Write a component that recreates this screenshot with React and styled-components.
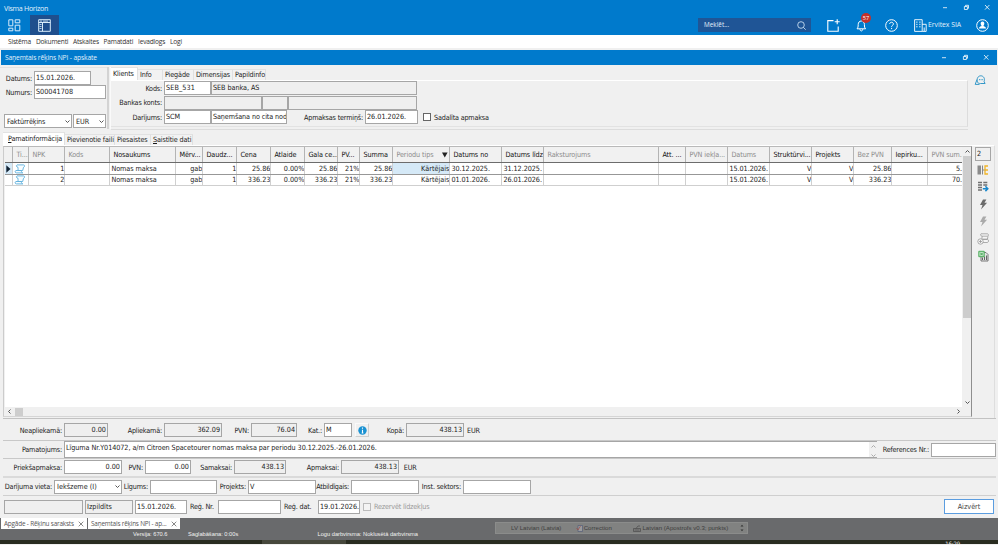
import styled, { createGlobalStyle, css } from "styled-components";

const GlobalStyle = createGlobalStyle`
  * {
    box-sizing: border-box;
  }
  body {
    margin: 0;
    overflow: hidden;
    font-family: "DejaVu Sans Condensed", "DejaVu Sans", sans-serif;
    font-stretch: condensed;
    font-size: 7.2px;
    line-height: 10px;
    letter-spacing: -0.14px;
    color: #1c1c1c;
    white-space: nowrap;
  }
  svg {
    display: block;
    flex: none;
  }
`;

const Screen = styled.div`
  width: 998px;
  height: 545px;
  display: flex;
  flex-direction: column;
  background-color: #f0f0f0;
  overflow: hidden;
`;

const segoe = css`
  font-family: "Open Sans", "Noto Sans", sans-serif;
  font-stretch: normal;
  letter-spacing: 0;
`;

const TitleBar = styled.div`
  ${segoe}
  height: 15px;
  flex: none;
  padding: 0 8px 0 4px;
  display: flex;
  align-items: center;
  justify-content: space-between;
  background-color: #007acc;
  color: #e3f1fb;
  font-size: 7.1px;
  letter-spacing: -0.3px;
`;

const InnerTitle = styled(TitleBar)`
  margin: 2px 1px 0 1px;
  font-size: 6.7px;
  letter-spacing: -0.13px;
`;

const ToolBar = styled.div`
  ${segoe}
  height: 20px;
  flex: none;
  display: flex;
  align-items: center;
  background-color: #007acc;
  color: #e3f1fb;
  font-size: 6.6px;
`;

const Tile = styled.div`
  width: ${(props) => props.$w}px;
  height: 20px;
  display: flex;
  align-items: center;
  justify-content: center;
  background-color: ${(props) => (props.$active ? "#1f4f8d" : "transparent")};
`;

const Search = styled.div`
  width: 113px;
  height: 14px;
  margin-left: auto;
  padding: 0 5px 0 6px;
  display: flex;
  align-items: center;
  justify-content: space-between;
  background-color: #1f5596;
  font-size: 6.4px;
`;

const Bell = styled.div`
  position: relative;
  margin-left: 16px;
  height: 13px;
`;

const Badge = styled.span`
  position: absolute;
  left: 5px;
  top: -6px;
  width: 10px;
  height: 10px;
  border-radius: 50%;
  background-color: #c4302b;
  color: white;
  font-size: 5.6px;
  line-height: 10px;
  text-align: center;
`;

const Company = styled.span`
  width: 34px;
  padding-left: 1px;
  font-size: 6.9px;
  letter-spacing: -0.05px;
`;

const Menu = styled.div`
  ${segoe}
  height: 13px;
  flex: none;
  padding-left: 8px;
  display: flex;
  align-items: center;
  background-color: white;
  font-size: 6.6px;
  letter-spacing: -0.2px;
  color: #333;
`;

const MenuItem = styled.span`
  width: ${(props) => props.$w}px;
`;

const Top = styled.div`
  height: 66px;
  flex: none;
  display: flex;
`;

const Left = styled.div`
  width: 107px;
  margin-top: 2px;
  padding: 3px 0 0 4px;
  height: 61px;
  border-top: 1px solid #e2e2e2;
`;

const Splitter = styled.div`
  width: 4px;
  height: 62px;
  margin-top: 2px;
  border-left: 2px solid #d3d3d3;
  border-right: 1px solid #fafafa;
`;

const Client = styled.div`
  width: 857px;
  height: 63px;
  margin-top: 2px;
  border-bottom: 1px solid #dcdcdc;
`;

const Page = styled.div`
  height: 47px;
  padding-left: 1px;
  border-top: 1px solid #fff;
  border-right: 1px solid #dcdcdc;
  border-bottom: 1px solid #e2e2e2;
`;

const TabStrip = styled.div`
  height: 13px;
  flex: none;
  display: flex;
  align-items: flex-end;
`;

const Tab = styled.div`
  width: ${(props) => props.$w}px;
  height: ${(props) => (props.$active ? 13 : 11)}px;
  padding-left: 2px;
  line-height: ${(props) => (props.$active ? 11 : 9)}px;
  background-color: ${(props) => (props.$active ? "#fff" : "#f2f2f2")};
  border-top: 1px solid #e2e2e2;
  border-right: 1px solid #e0e0e0;
`;

const Row = styled.div`
  display: flex;
  align-items: center;
  height: ${(props) => props.$h || 14}px;
  margin-top: ${(props) => props.$mt || 0}px;
`;

const Label = styled.div`
  width: ${(props) => props.$w}px;
  display: flex;
  flex: none;
  justify-content: ${(props) => (props.$start ? "flex-start" : "flex-end")};
  padding: ${(props) => (props.$start ? "1px 0 0 3px" : "1px 2px 0 0")};
  letter-spacing: ${(props) => props.$ls || -0.18}px;
  color: ${(props) => (props.$muted ? "#999" : "#1c1c1c")};
`;

const Field = styled.div`
  width: ${(props) => props.$w}px;
  height: ${(props) => props.$h || 14}px;
  flex: none;
  padding: 0 1px;
  border: 1px solid #a6a6a6;
  background-color: ${(props) => (props.$off ? "#efefef" : "#fff")};
  line-height: 11px;
  overflow: hidden;
  text-align: ${(props) => (props.$num ? "right" : "left")};
  letter-spacing: ${(props) => props.$ls || 0}px;
`;

const Combo = styled(Field)`
  display: flex;
  align-items: center;
  justify-content: space-between;
  padding-left: 2px;
`;

const Gap = styled.div`
  width: ${(props) => props.$w}px;
  flex: none;
`;

const Check = styled.div`
  width: 8px;
  height: 8px;
  flex: none;
  border: 1px solid ${(props) => (props.$muted ? "#bbb" : "#666")};
  background-color: ${(props) => (props.$muted ? "#f4f4f4" : "#fff")};
`;

const Middle = styled.div`
  height: 273px;
  flex: none;
  display: flex;
  margin: 0 3px 0 3px;
  border-top: 1px solid #fff;
  border-right: 1px solid #dedede;
`;

const GridBox = styled.div`
  width: 969px;
  height: 271px;
  padding-left: 1px;
  display: flex;
  flex-direction: column;
  border-top: 1px solid #b9b9b9;
  border-left: 1px solid #ccc;
  border-right: 1px solid #8e8e8e;
  border-bottom: 1px solid #d5d5d5;
`;

const GridMain = styled.div`
  display: flex;
  height: 260px;
`;

const Grid = styled.div`
  width: 957px;
  background-color: white;
  overflow: hidden;
`;

const Line = styled.div`
  display: flex;
  height: ${(props) => props.$h}px;
  border-bottom: ${(props) => props.$border};
  background-color: ${(props) => (props.$head ? "#f1f1f1" : "#fff")};
`;

const Cell = styled.div`
  width: ${(props) => props.$w}px;
  flex: none;
  display: flex;
  align-items: center;
  justify-content: ${(props) => (props.$right ? "flex-end" : "flex-start")};
  padding-left: 1px;
  overflow: hidden;
  border-right: 1px solid #d0d0d0;
  background-color: ${(props) => (props.$hot ? "#d5e9f7" : "transparent")};
  letter-spacing: ${(props) => (props.$right ? 0 : -0.05)}px;
`;

const Head = styled(Cell)`
  padding-left: 3px;
  justify-content: ${(props) => (props.$sort ? "space-between" : "flex-start")};
  color: ${(props) => (props.$grey ? "#8b8b8b" : "#111")};
  border-right-color: #b4b4b4;
  letter-spacing: -0.08px;
`;

const VScroll = styled.div`
  width: 9px;
  padding-left: 1px;
  display: flex;
  flex-direction: column;
  align-items: center;
  justify-content: space-between;
  background-color: #f0f0f0;
`;

const VThumb = styled.div`
  width: 8px;
  height: 162px;
  margin: 0 0 auto;
  background-color: #cdcdcd;
`;

const HScroll = styled.div`
  height: 9px;
  padding: 0 10px 0 2px;
  display: flex;
  align-items: center;
`;

const HThumb = styled.div`
  width: 8px;
  height: 8px;
  margin: 0 auto 0 3px;
  background-color: #cdcdcd;
`;

const Side = styled.div`
  flex: 1;
  display: flex;
  flex-direction: column;
  align-items: center;
  padding-top: 1px;
`;

const SideItem = styled.div`
  height: 17.3px;
  display: flex;
  align-items: center;
  justify-content: center;
`;

const Band = styled.div`
  height: ${(props) => props.$h}px;
  flex: none;
  margin: 0 2px 0 3px;
  padding-top: ${(props) => props.$pt || 0}px;
  border-top: ${(props) => props.$line || 1}px solid ${(props) => props.$color || "#c2c2c2"};
`;

const Memo = styled.div`
  width: 813px;
  height: 18px;
  padding: 0 1px;
  display: flex;
  justify-content: space-between;
  background-color: white;
  border: 1px solid #a6a6a6;
  border-right: 0;
  border-bottom-width: 2px;
  line-height: 12px;
  letter-spacing: -0.06px;
`;

const Spin = styled.div`
  width: 8px;
  margin-right: -1px;
  display: flex;
  flex-direction: column;
  align-items: center;
  justify-content: space-around;
  background-color: #f0f0f0;
`;

const InfoButton = styled.div`
  width: 14px;
  height: 14px;
  margin: 0 2px 0 3px;
  display: flex;
  align-items: center;
  justify-content: center;
  border: 1px solid #fafafa;
  border-right-color: #cfcfcf;
  border-bottom-color: #cfcfcf;
`;

const Button = styled.button`
  width: 50px;
  height: 15px;
  margin-left: auto;
  padding: 0;
  border: 1px solid #5b9de0;
  background-color: white;
  color: #444;
  font: inherit;
  letter-spacing: 0;
`;

const Footer = styled.div`
  ${segoe}
  height: 22px;
  flex: none;
  background-color: #696a6c;
`;

const Windows = styled.div`
  height: 11px;
  padding-left: 1px;
  display: flex;
  gap: 1px;
`;

const WindowTab = styled.div`
  width: ${(props) => props.$w}px;
  padding: 0 3px;
  display: flex;
  align-items: center;
  justify-content: space-between;
  background-color: white;
  color: #555;
  font-size: 6.4px;
  letter-spacing: -0.19px;
`;

const LangBar = styled.div`
  width: 253px;
  height: 12px;
  margin: 4px 0 0 314px;
  padding: 0 3px 0 15px;
  display: flex;
  align-items: center;
  flex: none;
  background-color: #818281;
  border: 1px solid #8b8c8b;
  color: #3e3e3e;
  font-family: "Liberation Sans", sans-serif;
  font-size: 6.1px;
`;

const LangItem = styled.div`
  width: ${(props) => props.$w}px;
  display: flex;
  gap: 1px;
  align-items: center;
`;

const Status = styled.div`
  height: 11px;
  display: flex;
  padding-left: 133px;
  color: #f2f2f2;
  font-family: "Liberation Sans", sans-serif;
  font-size: 5.7px;
  line-height: 11px;
  width: 490px;
`;

const Taskbar = styled.div`
  height: 4px;
  flex: none;
  display: flex;
  justify-content: space-between;
  padding: 0 38px 0 262px;
  overflow: hidden;
  background-color: #292c20;
  color: #eee;
  font-size: 6px;
  line-height: 8px;
`;

const TaskItem = styled.div`
  width: 84px;
  background-color: #46483c;
`;

function Chevron({ dir = "down", color = "#555", size = 5 }) {
  const turn = { down: 0, up: 180, left: 90, right: -90 }[dir];
  return (
    <svg width={size} height={size} viewBox="0 0 10 10" style={{ margin: "2px 0" }}>
      <path
        d="M1 3l4 4 4-4"
        fill="none"
        stroke={color}
        strokeWidth="2"
        transform={`rotate(${turn} 5 5)`}
      />
    </svg>
  );
}

function WindowButtons() {
  return (
    <svg width="48" height="7" viewBox="0 0 48 7" fill="none" stroke="#fff" strokeWidth=".8">
      <path d="M1 3.7h4M43 1l4.4 4.6M47.4 1L43 5.6" />
      <path d="M22.4 2.5h3v3h-3zM23.5 2.4V1.3h3v3h-1" />
    </svg>
  );
}

function Cross() {
  return (
    <svg width="6" height="6" viewBox="0 0 6 6" stroke="#555" strokeWidth=".7">
      <path d="M.7.7l4.6 4.6M5.3.7L.7 5.3" />
    </svg>
  );
}

function Scroll() {
  return (
    <svg width="12" height="10" viewBox="0 0 12 10" fill="#f7fcff" stroke="#5aaedb" strokeWidth=".9">
      <path d="M3 .9h6.6c1.300 0 1.300 2.200-.1 2.400L8.700 6.500H4C4 5.300 4.200 4.200 4 3.300 2.500 3.300 1.800 1.400 3 .9z" />
      <path d="M1.800 6.500h5.400c.2 1.200.7 2.400 1.600 2.400H2.400C1 8.900.8 7 1.800 6.500z" />
    </svg>
  );
}

function Bolt({ color }) {
  return (
    <svg width="9" height="11" viewBox="0 0 9 11" fill={color}>
      <path d="M4 .5h3.400L5.500 3.700h2.600L2 10.500l1.500-4.500H1z" />
    </svg>
  );
}

const columns = [
  ["Ti...", 16, 1],
  ["NPK", 36, 1],
  ["Kods", 45, 1],
  ["Nosaukums", 66],
  ["Mērv...", 27],
  ["Daudz...", 34],
  ["Cena", 34],
  ["Atlaide", 34],
  ["Gala ce...", 33],
  ["PV...", 22],
  ["Summa", 33],
  ["Periodu tips", 57, 1],
  ["Datums no", 52],
  ["Datums līdz", 42],
  ["Raksturojums", 115, 1],
  ["Att. ...", 27],
  ["PVN iekļa...", 42, 1],
  ["Datums", 42, 1],
  ["Struktūrvi...", 42],
  ["Projekts", 42],
  ["Bez PVN", 38, 1],
  ["Iepirku...", 36],
  ["PVN sum...", 43, 1],
];

const rows = [
  ["", "1", "", "Nomas maksa", "gab", "1", "25.86", "0.00%", "25.86", "21%", "25.86", "Kārtējais",
    "30.12.2025.", "31.12.2025.", "", "", "", "15.01.2026.", "V", "V", "25.86", "", "5.43"],
  ["", "2", "", "Nomas maksa", "gab", "1", "336.23", "0.00%", "336.23", "21%", "336.23", "Kārtējais",
    "01.01.2026.", "26.01.2026.", "", "", "", "15.01.2026.", "V", "V", "336.23", "", "70.61"],
];

const leftAligned = [0, 3, 12, 13, 17];

function Table() {
  return (
    <Grid>
      <Line $h={16} $head $border="1px solid #6c6c6c">
        <Head $w={8.4} />
        {columns.map(([name, w, grey]) => (
          <Head key={name + w} $w={w} $grey={grey} $sort={name === "Periodu tips"}>
            {name}
            {name === "Periodu tips" && (
              <svg width="8" height="6" viewBox="0 0 8 6" fill="#222">
                <path d="M1 .5h5.6L3.800 5.500z" />
              </svg>
            )}
          </Head>
        ))}
      </Line>
      {rows.map((row, r) => (
        <Line key={r} $h={r ? 11 : 12} $border={r ? "1px solid #cfcfcf" : "1px solid #979797"}>
          <Cell $w={8.4} $hot={r === 0}>
            {r === 0 && (
              <svg width="5" height="8" viewBox="0 0 5 8" fill="#123">
                <path d="M.3.3v7.400L4.500 4z" />
              </svg>
            )}
          </Cell>
          {row.map((text, i) => (
            <Cell
              key={i}
              $w={columns[i][1]}
              $right={!leftAligned.includes(i)}
              $hot={r === 0 && i === 11}
            >
              {i === 0 ? <Scroll /> : text}
            </Cell>
          ))}
        </Line>
      ))}
    </Grid>
  );
}

function Header() {
  return (
    <>
      <TitleBar>
        Visma Horizon
        <WindowButtons />
      </TitleBar>
      <ToolBar>
        <Tile $w={29}>
          <svg width="13" height="13" viewBox="0 0 13 13" fill="none" stroke="#d9ecfa">
            <path d="M.8.8h4v6h-4zM7.200.8h4.600v3H7.200zM.8 9.200h4v2.600h-4zM7.200 6.200h4.600v5.600H7.200z" />
          </svg>
        </Tile>
        <Gap $w={1} />
        <Tile $w={29} $active>
          <svg width="13" height="13" viewBox="0 0 13 13" fill="none" stroke="#d9ecfa">
            <path d="M.7.7h11.600v11.600H.7zM.7 3.500h11.600M4.500 3.500v8.800" />
            <path d="M1.500 5.500h2M1.500 7.500h2M1.500 9.500h2M2 2.100h2M5 2.100h5" strokeWidth=".8" />
          </svg>
        </Tile>
        <Search>
          Meklēt...
          <svg width="9" height="9" viewBox="0 0 9 9" fill="none" stroke="#d9ecfa" strokeWidth=".8">
            <circle cx="4" cy="4" r="3.300" />
            <path d="M6.400 6.400L8.700 8.700" />
          </svg>
        </Search>
        <Gap $w={16} />
        <svg width="13" height="13" viewBox="0 0 13 13" fill="none" stroke="#fff" strokeWidth="1.100">
          <path d="M6.500 1.600H.8v10.700h10.400V7.500M10.200.2v5M7.700 2.700h5" />
        </svg>
        <Bell>
          <svg width="11" height="13" viewBox="0 0 11 13" fill="none" stroke="#fff">
            <path d="M1 9.800c1-1 1.200-2 1.200-4.300C2.200 3.400 3.500 2 5.300 2s3.100 1.400 3.100 3.500c0 2.300.2 3.300 1.200 4.300zM4 10.200c0 2.300 2.700 2.300 2.700 0" />
          </svg>
          <Badge>57</Badge>
        </Bell>
        <Gap $w={18} />
        <svg width="13" height="13" viewBox="0 0 13 13" fill="none" stroke="#fff">
          <circle cx="6.500" cy="6.500" r="5.800" />
          <path d="M4.700 5c0-2.400 3.700-2.300 3.700 0 0 1.400-1.800 1.300-1.800 2.800M6.600 8.900v1.200" />
        </svg>
        <Gap $w={16} />
        <svg width="13" height="13" viewBox="0 0 13 13" fill="none" stroke="#fff">
          <path d="M.6 12.400V.7h7.600v11.700zM8.200 5.300h4v7.100H8.200M10.200 8.500v3.500" strokeWidth=".9" />
          <path d="M2.900 2.500v6.500M5.900 2.500v6.500" strokeDasharray="1.300 1" />
        </svg>
        <Company>Ervitex SIA</Company>
        <Gap $w={15} />
        <svg width="13" height="13" viewBox="0 0 13 13" fill="none" stroke="#fff">
          <circle cx="6.500" cy="6.500" r="5.800" />
          <path
            d="M6.500 2.600c1.400 0 2 1 1.800 2.300-.1.900-.5 1.400-.9 1.800.1.700 2.600.7 2.600 2.800h-7c0-2.100 2.500-2.100 2.600-2.800-.4-.4-.8-.9-.9-1.800-.2-1.300.4-2.300 1.800-2.300z"
            fill="#fff"
            stroke="none"
          />
        </svg>
        <Gap $w={9} />
      </ToolBar>
      <Menu>
        <MenuItem $w={28}>Sistēma</MenuItem>
        <MenuItem $w={37}>Dokumenti</MenuItem>
        <MenuItem $w={30.5}>Atskaites</MenuItem>
        <MenuItem $w={34.5}>Pamatdati</MenuItem>
        <MenuItem $w={32}>Ievadlogs</MenuItem>
        <MenuItem $w={20}>Logi</MenuItem>
      </Menu>
    </>
  );
}

function InvoiceHeader() {
  return (
    <Top>
      <Left>
        <Row>
          <Label $w={30}>Datums:</Label>
          <Field $w={57}>15.01.2026.</Field>
        </Row>
        <Row>
          <Label $w={30}>Numurs:</Label>
          <Field $w={72}>S00041708</Field>
        </Row>
        <Row $mt={15}>
          <Combo $w={68} $ls={-0.1}>
            Faktūrrēķins
            <Chevron />
          </Combo>
          <Gap $w={1} />
          <Combo $w={33}>
            EUR
            <Chevron />
          </Combo>
        </Row>
      </Left>
      <Splitter />
      <Client>
        <TabStrip>
          <Tab $w={27} $active>Klients</Tab>
          <Tab $w={25}>Info</Tab>
          <Tab $w={31}>Piegāde</Tab>
          <Tab $w={39}>Dimensijas</Tab>
          <Tab $w={33}>Papildinfo</Tab>
        </TabStrip>
        <Page>
          <Row>
            <Label $w={52}>Kods:</Label>
            <Field $w={47} $ls={0.1}>SEB_531</Field>
            <Field $w={206} $off $ls={-0.05}>SEB banka, AS</Field>
          </Row>
          <Row $h={15}>
            <Label $w={52}>Bankas konts:</Label>
            <Field $w={98} $off />
            <Field $w={26} $off />
            <Field $w={129} $off />
          </Row>
          <Row>
            <Label $w={52}>Darījums:</Label>
            <Field $w={47}>SCM</Field>
            <Field $w={76} $ls={-0.1}>Saņemšana no cita nodokļa</Field>
            <Label $w={78}>Apmaksas termiņš:</Label>
            <Field $w={53}>26.01.2026.</Field>
            <Gap $w={5} />
            <Check />
            <Label $w={60} $start>Sadalīta apmaksa</Label>
          </Row>
        </Page>
      </Client>
      <svg width="12" height="12" viewBox="0 0 12 12" fill="none" stroke="#3498c8" style={{ margin: "9px 0 0 6px" }}>
        <path d="M3.500 8.300C2.300 4.800 4 1.800 6.800 1.800s4.500 3 3.300 5.800l1 1.900H6.600C5 9.500 4 9 3.500 8.300zM3 5.500L1.200 10.400h4.300" />
        <path d="M5 5.700h4.200" strokeDasharray="1 .6" />
      </svg>
    </Top>
  );
}

function Lines() {
  return (
    <>
      <TabStrip style={{ margin: "1px 0 0 3px" }}>
        <Tab $w={62} $active style={{ paddingLeft: 5 }}><u>P</u>amatinformācija</Tab>
        <Tab $w={50}>Pievienotie faili</Tab>
        <Tab $w={36}>Piesaistes</Tab>
        <Tab $w={42}><u>S</u>aistītie dati</Tab>
      </TabStrip>
      <Middle>
        <GridBox>
          <GridMain>
            <Table />
            <VScroll>
              <Chevron dir="up" />
              <VThumb />
              <Chevron />
            </VScroll>
          </GridMain>
          <HScroll>
            <Chevron dir="left" />
            <HThumb />
            <Chevron dir="right" />
          </HScroll>
        </GridBox>
        <Side>
          <Field $w={16} $off>2</Field>
          <SideItem>
            <svg width="12" height="10" viewBox="0 0 12 10" fill="none">
              <path d="M.5.500h3.500v9H.5z" fill="#8b8b8b" />
              <path d="M5.500.500v9M5.500 5h3" stroke="#888" />
              <path d="M11 1H8v8h3M8 5h3" stroke="#f0b429" strokeWidth="1.300" />
            </svg>
          </SideItem>
          <SideItem>
            <svg width="12" height="11" viewBox="0 0 12 11" fill="none" stroke="#707070" strokeWidth="1.300">
              <path d="M1 1.500h4M6.300 1.500h4M1 4h4M6.300 4h4M1 6.500h4M1 9h4" />
              <path d="M5.800 7.700h5M8.400 5.300l2.400 2.400-2.400 2.400" stroke="#1787cc" strokeWidth="1.500" />
            </svg>
          </SideItem>
          <SideItem><Bolt color="#6b6b6b" /></SideItem>
          <SideItem><Bolt color="#aaa" /></SideItem>
          <SideItem>
            <svg width="12" height="12" viewBox="0 0 12 12" fill="#f5f5f5" stroke="#999" strokeWidth=".8">
              <path d="M4 .8h6.500c1.300.3 1.200 2.200 0 2.400H5C3.500 3 3.200 1.300 4 .8zM5.200 3.200L4.800 6.300h5.600l.6-3M5.500 6.300h5c1.400.3 1.200 2.900 0 3.200H6" />
              <circle cx="3.500" cy="8.500" r="2.700" />
              <path d="M2 8.500h3M3.500 7v3" />
            </svg>
          </SideItem>
          <SideItem>
            <svg width="11" height="12" viewBox="0 0 11 12" fill="none">
              <path d="M4 2.500h4l2 2v6.500H3V6" fill="#e6e6e6" stroke="#777" />
              <path d="M4.500 10V7.500M6.500 10V6.500M8.500 10V5.500" stroke="#666" />
              <path d="M.8 1.300h5.400v5.400H.8z" fill="#bfe5c5" stroke="#4dac5b" />
              <path d="M2.300 2.800l2.500 2.500M4.800 2.800L2.300 5.300" stroke="#329542" strokeWidth=".8" />
            </svg>
          </SideItem>
        </Side>
      </Middle>
    </>
  );
}

function Totals() {
  return (
    <>
      <Band $h={22} $pt={4}>
        <Row>
          <Label $w={61}>Neapliekamā:</Label>
          <Field $w={44} $off $num>0.00</Field>
          <Label $w={56}>Apliekamā:</Label>
          <Field $w={58} $off $num>362.09</Field>
          <Label $w={29}>PVN:</Label>
          <Field $w={46} $off $num>76.04</Field>
          <Label $w={27}>Kat.:</Label>
          <Field $w={28}>M</Field>
          <InfoButton>
            <svg width="9" height="9" viewBox="0 0 9 9">
              <circle cx="4.500" cy="4.500" r="4.200" fill="#1b92d2" />
              <path d="M4.500 1.500v1.300M4.500 3.700v3.500M3.700 7h1.700" stroke="#fff" strokeWidth="1.100" />
            </svg>
          </InfoButton>
          <Label $w={35}>Kopā:</Label>
          <Field $w={58} $off $num>438.13</Field>
          <Label $w={30} $start>EUR</Label>
        </Row>
      </Band>
      <Band $h={18} $color="#c8c8c8">
        <Row $h={17}>
          <Label $w={61}>Pamatojums:</Label>
          <Memo>
            Līguma Nr.Y014072, a/m Citroen Spacetourer nomas maksa par periodu 30.12.2025.-26.01.2026.
            <Spin>
              <Chevron dir="up" color="#aaa" />
              <Chevron color="#aaa" />
            </Spin>
          </Memo>
          <Label $w={54}>References Nr.:</Label>
          <Field $w={65} />
        </Row>
      </Band>
      <Band $h={18} $color="#c8c8c8" $pt={1}>
        <Row>
          <Label $w={61}>Priekšapmaksa:</Label>
          <Field $w={58} $num>0.00</Field>
          <Label $w={23}>PVN:</Label>
          <Field $w={46} $num>0.00</Field>
          <Label $w={43}>Samaksai:</Label>
          <Field $w={52} $off $num>438.13</Field>
          <Label $w={55}>Apmaksai:</Label>
          <Field $w={58} $off $num>438.13</Field>
          <Label $w={30} $start>&nbsp;EUR</Label>
        </Row>
      </Band>
      <Band $h={19} $line={2} $color="#dadada" $pt={1}>
        <Row $h={15}>
          <Label $w={51}>Darījuma vieta:</Label>
          <Combo $w={68}>
            Iekšzeme (I)
            <Chevron />
          </Combo>
          <Label $w={28}>Līgums:</Label>
          <Field $w={67} />
          <Label $w={31}>Projekts:</Label>
          <Field $w={68}>V</Field>
          <Label $w={35} $ls={-0.25}>Atbildīgais:</Label>
          <Field $w={68} />
          <Label $w={44}>Inst. sektors:</Label>
          <Field $w={68} />
        </Row>
      </Band>
      <Band $h={23} $pt={3} $color="#cfcfcf">
        <Row $h={15}>
          <Gap $w={1} />
          <Field $w={79} $off />
          <Gap $w={2} />
          <Field $w={48} $off>Izpildīts</Field>
          <Gap $w={2} />
          <Field $w={52}>15.01.2026.</Field>
          <Label $w={31} $start>Reģ. Nr.</Label>
          <Field $w={63} />
          <Label $w={37} $start>Reģ. dat.</Label>
          <Field $w={42}>19.01.2026.</Field>
          <Gap $w={3} />
          <Check $muted />
          <Label $w={60} $start $muted>Rezervēt līdzekļus</Label>
          <Button>Aizvērt</Button>
          <Gap $w={2} />
        </Row>
      </Band>
    </>
  );
}

function Bottom() {
  return (
    <>
      <Footer>
        <Windows>
          <WindowTab $w={86}>
            Apgāde - Rēķinu saraksts
            <Cross />
          </WindowTab>
          <WindowTab $w={92}>
            Saņemtais rēķins NPI - ap...
            <Cross />
          </WindowTab>
          <LangBar>
            <LangItem $w={65}>LV Latvian (Latvia)</LangItem>
            <LangItem $w={58}>
              <svg width="7" height="7" viewBox="0 0 7 7" fill="#9a9b9e" stroke="#555d77" strokeWidth=".7">
                <path d="M2 .5h4.500v6H2z" />
                <path d="M.5 3l1.500 2L4.500 1" stroke="#a04a44" fill="none" />
              </svg>
              Correction
            </LangItem>
            <LangItem $w={107}>
              <svg width="8" height="7" viewBox="0 0 8 7" fill="none" stroke="#4b4b4b" strokeWidth=".7">
                <path d="M.5 3.500h7v3h-7zM1.500 5h5M3 3.500L5 1h2" />
              </svg>
              Latvian (Apostrofs v0.3; punkts)
            </LangItem>
            <svg width="4" height="8" viewBox="0 0 4 8" fill="#333">
              <path d="M.5 2.500L2 .8l1.500 1.700zM.5 5.500L2 7.200l1.500-1.700z" />
            </svg>
          </LangBar>
        </Windows>
        <Status>
          <MenuItem $w={55}>Versija: 670.6</MenuItem>
          <MenuItem $w={129.5}>Saglabāšana: 0:00s</MenuItem>
          <MenuItem $w={100}>Logu darbvirsma: Noklusētā darbvirsma</MenuItem>
        </Status>
      </Footer>
      <Taskbar>
        <TaskItem />
        16:29
      </Taskbar>
    </>
  );
}

function App() {
  return (
    <>
      <GlobalStyle />
      <Screen>
        <Header />
        <InnerTitle>
          Saņemtais rēķins NPI - apskate
          <WindowButtons />
        </InnerTitle>
        <InvoiceHeader />
        <Lines />
        <Totals />
        <Bottom />
      </Screen>
    </>
  );
}

export default App;
